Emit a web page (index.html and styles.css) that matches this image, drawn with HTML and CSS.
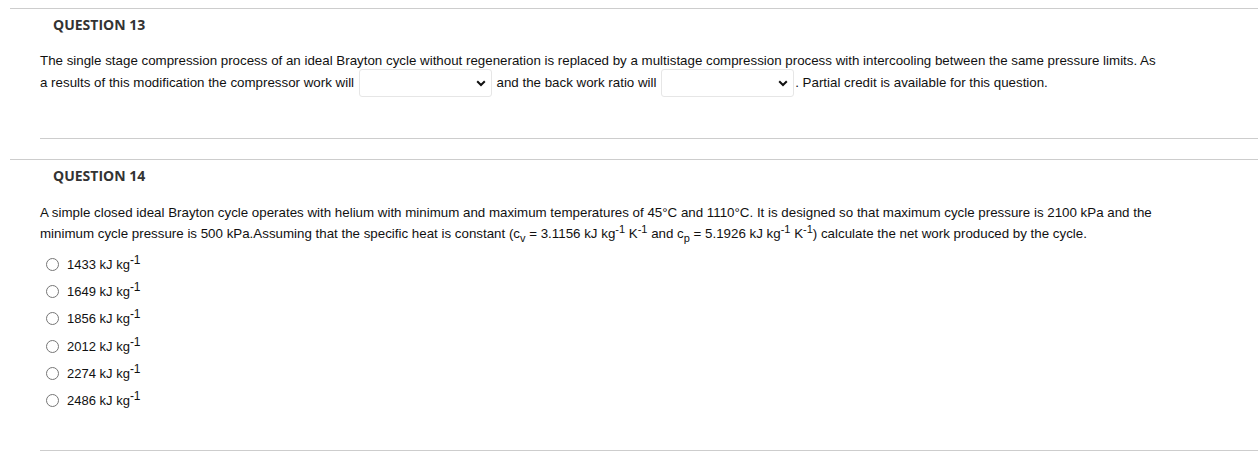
FILE: index.html
```html
<!DOCTYPE html>
<html>
<head>
<meta charset="utf-8">
<link rel="stylesheet" href="styles.css">
</head>
<body>
<ul class="questions">
  <li class="question">
    <h3 class="q-title">QUESTION 13</h3>
    <div class="q-body q13">
      <p class="q-text">The single stage compression process of an ideal Brayton cycle without regeneration is replaced by a multistage compression process with intercooling between the same pressure limits. As a results of this modification the compressor work will <span class="select"><svg class="chev" width="10" height="7" viewBox="0 0 10 7"><path d="M1.2 1.2 L5 5 L8.8 1.2" fill="none" stroke="#111" stroke-width="2"/></svg></span> and the back work ratio will <span class="select"><svg class="chev" width="10" height="7" viewBox="0 0 10 7"><path d="M1.2 1.2 L5 5 L8.8 1.2" fill="none" stroke="#111" stroke-width="2"/></svg></span>. Partial credit is available for this question.</p>
    </div>
  </li>
  <li class="question">
    <h3 class="q-title">QUESTION 14</h3>
    <div class="q-body q14">
      <p class="q-text">A simple closed ideal Brayton cycle operates with helium with minimum and maximum temperatures of 45°C and 1110°C. It is designed so that maximum cycle pressure is 2100 kPa and the minimum cycle pressure is 500 kPa.Assuming that the specific heat is constant (c<sub>v</sub> = 3.1156 kJ kg<sup>-1</sup> K<sup>-1</sup> and c<sub>p</sub> = 5.1926 kJ kg<sup>-1</sup> K<sup>-1</sup>) calculate the net work produced by the cycle.</p>
      <div class="options">
        <label class="opt"><span class="radio"></span><span>1433 kJ kg<sup class="osup">-1</sup></span></label>
        <label class="opt"><span class="radio"></span><span>1649 kJ kg<sup class="osup">-1</sup></span></label>
        <label class="opt"><span class="radio"></span><span>1856 kJ kg<sup class="osup">-1</sup></span></label>
        <label class="opt"><span class="radio"></span><span>2012 kJ kg<sup class="osup">-1</sup></span></label>
        <label class="opt"><span class="radio"></span><span>2274 kJ kg<sup class="osup">-1</sup></span></label>
        <label class="opt"><span class="radio"></span><span>2486 kJ kg<sup class="osup">-1</sup></span></label>
      </div>
    </div>
  </li>
</ul>
</body>
</html>
```
FILE: styles.css
```css
html, body {
  margin: 0;
  padding: 0;
  background: #fff;
}
.questions {
  list-style: none;
  margin: 0;
  padding: 8px 0 0 10px;
}
.question {
  border-top: 1px solid #cdcdcd;
}
.q-title {
  margin: 0;
  padding: 7px 0 0 43px;
  font-family: "Open Sans", sans-serif;
  font-weight: 700;
  font-size: 14px;
  line-height: 18px;
  color: #333;
}
.q-body {
  margin-left: 30px;
  border-bottom: 1px solid #cdcdcd;
}
.q13 {
  padding: 16px 0 44px 0;
  margin-bottom: 20px;
}
.q14 {
  padding: 17px 0 41px 0;
}
.q-text {
  margin: 0;
  padding-right: 98px;
  font-family: "Liberation Sans", Arial, sans-serif;
  font-size: 13.33px;
  line-height: 22px;
  color: #111;
}
.q14 .q-text {
  line-height: 21px;
}
.select {
  display: inline-flex;
  align-items: center;
  justify-content: flex-end;
  box-sizing: border-box;
  width: 133px;
  height: 28px;
  vertical-align: middle;
  border: 1px solid #e6e6e6;
  border-radius: 3px;
  padding-right: 5px;
  margin: -3px 1px;
  background: #fff;
}
.chev {
  display: block;
}
sub, sup {
  font-size: 11px;
  line-height: 0;
}
.options {
  display: flex;
  flex-direction: column;
  gap: 9.2px;
  padding-top: 11px;
  padding-left: 6px;
}
.opt {
  display: flex;
  align-items: center;
  gap: 8px;
  height: 18px;
  font-family: "Liberation Sans", Arial, sans-serif;
  font-size: 13px;
  color: #111;
}
.radio {
  box-sizing: border-box;
  width: 13px;
  height: 13px;
  border: 1px solid #767676;
  border-radius: 50%;
  background: #fff;
}
.osup {
  font-size: 12px;
  vertical-align: 5px;
}
```
